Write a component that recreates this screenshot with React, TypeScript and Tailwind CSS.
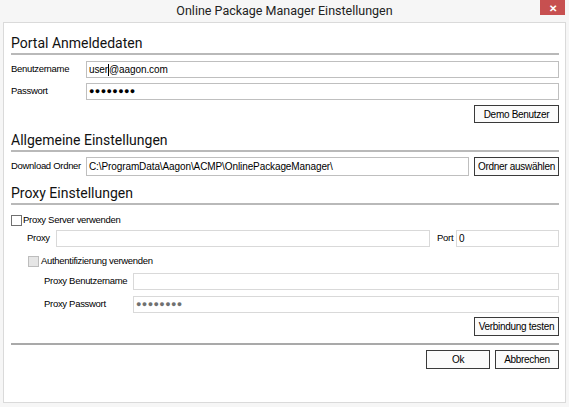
import React from "react";

const FONT = "font-['Liberation_Sans',Arial,sans-serif]";
const LABEL = `${FONT} whitespace-nowrap text-[9.5px] tracking-[-0.3px] text-black`;
const HEAD = "h-[20px] leading-[20px] whitespace-nowrap font-['Roboto',sans-serif] text-[14px] text-[#111]";
const INPUT = `flex items-center overflow-hidden whitespace-nowrap border border-[#bfbfbf] bg-white px-[2px] ${FONT} text-[10px] tracking-[-0.1px] text-black`;
const BTN = `flex items-center justify-center whitespace-nowrap border border-[#3a3a3a] bg-[#fbfbfb] ${FONT} text-[10px] tracking-[-0.3px] text-black`;

function Dots({ gray }: { gray?: boolean }) {
  return (
    <span
      className={`${FONT} text-[9px] tracking-[0.4px] ${gray ? "text-[#707070]" : "text-black"}`}
    >
      ●●●●●●●●
    </span>
  );
}

function SectionLine() {
  return <div className="h-[2px] bg-[#b9b9b9]" />;
}

function Checkbox({ disabled }: { disabled?: boolean }) {
  return (
    <span
      className={`block h-[11px] w-[11px] shrink-0 border ${
        disabled ? "border-[#bdbdbd] bg-[#e6e6e6]" : "border-[#707070] bg-white"
      }`}
    />
  );
}

export default function App() {
  return (
    <div className="flex h-[407px] w-[569px] flex-col bg-[#f6f6f6] select-none">
      {/* Title bar */}
      <div className="flex h-[22px] shrink-0 items-start">
        <div className="w-[29px]" />
        <div className="flex-1 pt-[2px] text-center font-['Roboto',sans-serif] text-[12.5px] leading-[18px] text-[#222]">
          Online Package Manager Einstellungen
        </div>
        <div className="mr-[4px] flex h-[15px] w-[25px] items-center justify-center bg-[#c75050] text-[10px] font-bold leading-none text-white">
          ✕
        </div>
      </div>

      {/* Content */}
      <div className="mx-[3px] mb-[4px] flex-1 border border-[#dadada] bg-white pl-[7px] pr-[6px]">
        <div className={`mt-[10px] ${HEAD}`}>Portal Anmeldedaten</div>
        <SectionLine />

        <div className="mt-[6px] flex h-[17px] items-center">
          <span className={`w-[75px] shrink-0 ${LABEL}`}>Benutzername</span>
          <div className={`h-full flex-1 ${INPUT}`}>
            user<span className="inline-block h-[12px] w-px bg-black" />@aagon.com
          </div>
        </div>
        <div className="mt-[5px] flex h-[17px] items-center">
          <span className={`w-[75px] shrink-0 ${LABEL}`}>Passwort</span>
          <div className={`h-full flex-1 ${INPUT}`}>
            <Dots />
          </div>
        </div>
        <div className="mt-[5px] flex justify-end">
          <div className={`h-[18px] w-[85px] ${BTN}`}>Demo Benutzer</div>
        </div>

        <div className={`mt-[7px] ${HEAD}`}>Allgemeine Einstellungen</div>
        <SectionLine />
        <div className="mt-[5px] flex h-[19px] items-center">
          <span className={`w-[75px] shrink-0 ${LABEL}`}>Download Ordner</span>
          <div className={`h-full flex-1 ${INPUT}`}>
            C:\ProgramData\Aagon\ACMP\OnlinePackageManager\
          </div>
          <div className={`ml-[5px] h-full w-[85px] ${BTN}`}>Ordner auswählen</div>
        </div>

        <div className={`mt-[7px] ${HEAD}`}>Proxy Einstellungen</div>
        <SectionLine />
        <div className="mt-[8px] flex h-[14px] items-center gap-[1px]">
          <Checkbox />
          <span className={`${LABEL}`}>Proxy Server verwenden</span>
        </div>

        <div className="mt-[3px] flex h-[17px] items-center pl-[16px]">
          <span className={`w-[29px] shrink-0 ${LABEL} text-[#8a8a8a]`}>Proxy</span>
          <div className={`h-full flex-1 ${INPUT} border-[#d9d9d9]`} />
          <span className={`w-[26px] shrink-0 pl-[7px] ${LABEL} text-[#8a8a8a]`}>Port</span>
          <div className={`h-full w-[103px] ${INPUT} border-[#d9d9d9] text-[#6a6a6a]`}>0</div>
        </div>

        <div className="mt-[7px] flex h-[14px] items-center gap-[2px] pl-[17px]">
          <Checkbox disabled />
          <span className={`${LABEL} text-[#8a8a8a]`}>Authentifizierung verwenden</span>
        </div>

        <div className="mt-[5px] flex h-[17px] items-center pl-[33px]">
          <span className={`w-[89px] shrink-0 ${LABEL} text-[#8a8a8a]`}>Proxy Benutzername</span>
          <div className={`h-full flex-1 ${INPUT} border-[#d9d9d9]`} />
        </div>
        <div className="mt-[6px] flex h-[17px] items-center pl-[33px]">
          <span className={`w-[89px] shrink-0 ${LABEL} text-[#8a8a8a]`}>Proxy Passwort</span>
          <div className={`h-full flex-1 ${INPUT} border-[#d9d9d9]`}>
            <Dots gray />
          </div>
        </div>

        <div className="mt-[4px] flex justify-end">
          <div className={`h-[19px] w-[85px] ${BTN}`}>Verbindung testen</div>
        </div>

        <div className="mt-[7px] h-[2px] bg-[#a9a9a9]" />

        <div className="mt-[5px] flex justify-end gap-[5px]">
          <div className={`h-[19px] w-[64px] ${BTN}`}>Ok</div>
          <div className={`h-[19px] w-[64px] ${BTN}`}>Abbrechen</div>
        </div>
      </div>
    </div>
  );
}
